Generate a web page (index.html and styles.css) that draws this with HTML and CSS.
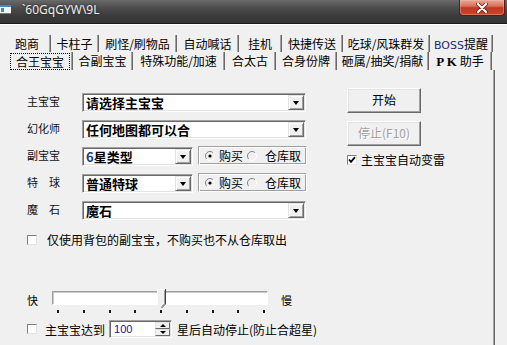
FILE: index.html
```html
<!DOCTYPE html>
<html>
<head>
<meta charset="utf-8">
<link rel="stylesheet" href="styles.css">
</head>
<body>
<div class="titlebar">
  <svg class="appicon" width="11" height="9" viewBox="0 0 11 9"><rect x="0" y="0" width="11" height="9" fill="#f4f4f4"/><rect x="0" y="0" width="11" height="2" fill="#4a86b8"/><rect x="1" y="3" width="3" height="4" fill="#2f9d86"/><rect x="0" y="8" width="11" height="1" fill="#777"/></svg>
  <span class="title">`60GqGYW\9L</span>
  <span class="spacer"></span>
  <div class="close"><svg width="14" height="10" viewBox="0 0 14 10"><path d="M3 1 L11 9 M11 1 L3 9" stroke="#5a1a10" stroke-width="3.6" stroke-linecap="round"/><path d="M3 1 L11 9 M11 1 L3 9" stroke="#fff" stroke-width="2.2" stroke-linecap="round"/></svg></div>
</div>
<div class="client">
  <div class="tabrow row1">
    <div class="tab w47">跑商</div>
    <div class="tab w48">卡柱子</div>
    <div class="tab w78">刷怪/刷物品</div>
    <div class="tab w62">自动喊话</div>
    <div class="tab w43">挂机</div>
    <div class="tab w61">快捷传送</div>
    <div class="tab w87">吃球/风珠群发</div>
    <div class="tab w63"><span class="boss">BOSS</span>提醒</div>
  </div>
  <div class="tabrow row2">
    <div class="tab w68 sel"><span class="focus">合王宝宝</span></div>
    <div class="tab w60">合副宝宝</div>
    <div class="tab w92">特殊功能/加速</div>
    <div class="tab w51">合太古</div>
    <div class="tab w61">合身份牌</div>
    <div class="tab w92">砸属/抽奖/捐献</div>
    <div class="tab w63"><b class="pk">P K</b> 助手</div>
  </div>
  <div class="panel">
    <div class="main">
      <div class="form">
        <div class="frow">
          <span class="lbl">主宝宝</span>
          <div class="combo"><span class="ctext">请选择主宝宝</span><span class="dd"><i class="arrow"></i></span></div>
        </div>
        <div class="frow">
          <span class="lbl">幻化师</span>
          <div class="combo"><span class="ctext">任何地图都可以合</span><span class="dd"><i class="arrow"></i></span></div>
        </div>
        <div class="frow">
          <span class="lbl">副宝宝</span>
          <div class="combo short"><span class="ctext"><span class="six">6</span>星类型</span><span class="dd"><i class="arrow"></i></span></div>
          <div class="grp">
            <svg class="radio" width="10" height="10" viewBox="0 0 10 10"><path d="M8.2 1.8 A4.5 4.5 0 0 0 1.8 8.2" fill="none" stroke="#808080" stroke-width="1"/><path d="M1.8 8.2 A4.5 4.5 0 0 0 8.2 1.8" fill="none" stroke="#fff" stroke-width="1"/><circle cx="5" cy="5" r="1.6" fill="#000"/></svg>
            <span class="rtext">购买</span>
            <svg class="radio r2" width="10" height="10" viewBox="0 0 10 10"><path d="M8.2 1.8 A4.5 4.5 0 0 0 1.8 8.2" fill="none" stroke="#808080" stroke-width="1"/><path d="M1.8 8.2 A4.5 4.5 0 0 0 8.2 1.8" fill="none" stroke="#fff" stroke-width="1"/></svg>
            <span class="rtext r2t">仓库取</span>
          </div>
        </div>
        <div class="frow">
          <span class="lbl">特　球</span>
          <div class="combo short"><span class="ctext">普通特球</span><span class="dd"><i class="arrow"></i></span></div>
          <div class="grp">
            <svg class="radio" width="10" height="10" viewBox="0 0 10 10"><path d="M8.2 1.8 A4.5 4.5 0 0 0 1.8 8.2" fill="none" stroke="#808080" stroke-width="1"/><path d="M1.8 8.2 A4.5 4.5 0 0 0 8.2 1.8" fill="none" stroke="#fff" stroke-width="1"/><circle cx="5" cy="5" r="1.6" fill="#000"/></svg>
            <span class="rtext">购买</span>
            <svg class="radio r2" width="10" height="10" viewBox="0 0 10 10"><path d="M8.2 1.8 A4.5 4.5 0 0 0 1.8 8.2" fill="none" stroke="#808080" stroke-width="1"/><path d="M1.8 8.2 A4.5 4.5 0 0 0 8.2 1.8" fill="none" stroke="#fff" stroke-width="1"/></svg>
            <span class="rtext r2t">仓库取</span>
          </div>
        </div>
        <div class="frow">
          <span class="lbl">魔　石</span>
          <div class="combo"><span class="ctext">魔石</span><span class="dd"><i class="arrow"></i></span></div>
        </div>
      </div>
      <div class="side">
        <div class="btn">开始</div>
        <div class="btn disabled">停止(F10)</div>
        <div class="chkrow side-chk">
          <span class="chk"><svg width="8" height="8" viewBox="0 0 8 8"><path d="M1 3.5 L3 5.8 L7 1.2" fill="none" stroke="#000" stroke-width="1.8"/></svg></span>
          <span class="ctxt">主宝宝自动变雷</span>
        </div>
      </div>
    </div>
    <div class="chkrow only">
      <span class="chk"></span>
      <span class="ctxt gap10">仅使用背包的副宝宝，不购买也不从仓库取出</span>
    </div>
    <div class="speed">
      <span class="slbl">快</span>
      <div class="slider">
        <div class="track"></div>
        <svg class="thumb" width="9" height="19" viewBox="0 0 9 19"><polygon points="0.5,0.5 8.5,0.5 8.5,15 4.5,18.5 0.5,15" fill="#f0f0f0"/><polyline points="0.5,15 0.5,0.5 8,0.5" fill="none" stroke="#fff"/><polyline points="8.5,0 8.5,15 4.5,19" fill="none" stroke="#404040"/><polyline points="7.5,1.5 7.5,14.5 4.5,17.5" fill="none" stroke="#a0a0a0"/></svg>
        <div class="ticks"><span class="tick"></span><span class="tick"></span><span class="tick"></span><span class="tick"></span><span class="tick"></span><span class="tick"></span><span class="tick"></span><span class="tick"></span><span class="tick"></span></div>
      </div>
      <span class="slbl slow">慢</span>
    </div>
    <div class="stoprow">
      <span class="chk"></span>
      <span class="ctxt gap8">主宝宝达到</span>
      <div class="spin">
        <span class="num">100</span>
        <span class="spinbtns"><span class="sb"><i class="up"></i></span><span class="sb"><i class="down"></i></span></span>
      </div>
      <span class="ctxt after">星后自动停止(防止合超星)</span>
    </div>
  </div>
</div>
</body>
</html>
```

FILE: styles.css
```css
* { box-sizing: border-box; }
html, body { margin: 0; padding: 0; }
body {
  width: 507px;
  height: 345px;
  overflow: hidden;
  background: #f0f0f0;
  font-family: "Noto Sans CJK SC", "Noto Sans", sans-serif;
  font-size: 12px;
  color: #000;
}

/* title bar */
.titlebar {
  height: 24px;
  display: flex;
  align-items: flex-start;
  background: linear-gradient(180deg, #6a6a6a 0%, #4c4c4c 35%, #3b3b3b 70%, #343434 100%);
  border-bottom: 1px solid #1a1a1a;
}
.appicon { margin-top: 5px; flex: none; }
.title {
  margin-left: 11px;
  margin-top: 2px;
  line-height: 16px;
  font-family: "Noto Sans", "Open Sans", sans-serif;
  font-size: 12px;
  color: #ececec;
  text-shadow: 0 0 3px #222;
}
.spacer { flex: 1; }
.close {
  width: 46px;
  height: 16px;
  margin-right: 2px;
  border: 1px solid #5b1d12;
  border-top: none;
  border-radius: 0 0 4px 4px;
  background: linear-gradient(180deg, #e9a796 0%, #d9735b 40%, #c0381f 52%, #c84a2e 100%);
  display: flex;
  align-items: center;
  justify-content: center;
  box-shadow: inset 0 0 0 1px rgba(255,200,180,0.35);
}

/* client area */
.client {
  border-top: 1px solid #ffffff;
  padding-top: 10px;
}
.tabrow { display: flex; }
.row1 { margin-left: 4px; height: 17px; }
.row2 { margin-left: 5px; height: 18px; }
.tab {
  flex: none;
  line-height: 17px;
  text-align: center;
  white-space: nowrap;
  border-right: 1px solid #696969;
  box-shadow: inset -1px 0 #a0a0a0;
}
.row2 .tab { line-height: 18px; }
.w43 { width: 43px; } .w47 { width: 47px; } .w48 { width: 48px; }
.w51 { width: 51px; } .w60 { width: 60px; } .w61 { width: 61px; }
.w62 { width: 62px; } .w63 { width: 63px; } .w68 { width: 68px; }
.w78 { width: 78px; } .w87 { width: 87px; } .w92 { width: 92px; }
.boss { color: #1e2a70; font-family: "DejaVu Sans", sans-serif; font-size: 11px; }
.pk { font-family: "Liberation Serif", serif; font-size: 13px; font-weight: bold; }
.tab.sel { padding: 1px 2px 0 5px; }
.focus {
  display: block;
  border: 1px dotted #000;
  line-height: 15px;
}

/* panel */
.panel {
  margin-left: 7px;
  width: 488px;
  height: 275px;
  border-right: 1px solid #696969;
  box-shadow: inset -1px 0 #a0a0a0;
  padding: 18px 0 0 20px;
}
.main { display: flex; gap: 40px; }
.form {
  margin-top: 5px;
  width: 280px;
  display: flex;
  flex-direction: column;
  gap: 8px;
}
.frow { display: flex; height: 19px; }
.lbl {
  width: 55px;
  flex: none;
  font-size: 11px;
  line-height: 13px;
  padding-top: 2px;
  color: #111;
}
.combo {
  width: 224px;
  height: 19px;
  flex: none;
  display: flex;
  background: #fff;
  border: 1px solid;
  border-color: #a0a0a0 #ffffff #ffffff #a0a0a0;
  box-shadow: inset 1px 1px #696969, inset -1px -1px #e3e3e3;
  padding: 1px 1px 1px 2px;
}
.combo.short { width: 111px; }
.ctext {
  flex: 1;
  font-weight: bold;
  font-size: 13px;
  line-height: 15px;
  padding-left: 1px;
  white-space: nowrap;
}
.six { color: #1c3490; }
.dd {
  width: 16px;
  flex: none;
  background: #f0f0f0;
  border: 1px solid;
  border-color: #e3e3e3 #696969 #696969 #e3e3e3;
  box-shadow: inset 1px 1px #fff, inset -1px -1px #a0a0a0;
  display: flex;
  align-items: center;
  justify-content: center;
}
.arrow {
  width: 0; height: 0;
  border-left: 3.5px solid transparent;
  border-right: 3.5px solid transparent;
  border-top: 4px solid #000;
  margin-top: 1px;
}
.grp {
  margin-left: 5px;
  margin-top: -1px;
  width: 109px;
  height: 19px;
  flex: none;
  border: 1px solid;
  border-color: #a0a0a0 #ffffff #ffffff #a0a0a0;
  box-shadow: inset 1px 1px #fff, inset -1px -1px #a0a0a0;
  display: flex;
  align-items: center;
  padding-left: 6px;
}
.radio { flex: none; }
.rtext { margin-left: 4px; line-height: 15px; white-space: nowrap; }
.r2 { margin-left: 4px; }
.r2t { margin-left: 8px; }

/* side */
.side { display: flex; flex-direction: column; width: 110px; }
.btn {
  width: 74px;
  height: 25px;
  background: #f0f0f0;
  border: 1px solid;
  border-color: #ffffff #696969 #696969 #ffffff;
  box-shadow: inset -1px -1px #a0a0a0, inset 1px 1px #e3e3e3;
  text-align: center;
  line-height: 22px;
}
.btn + .btn { margin-top: 8px; }
.btn.disabled { color: #a0a0a0; text-shadow: 1px 1px #fff; }
.chkrow { display: flex; align-items: center; line-height: 14px; }
.side-chk { margin-top: 7px; }
.chk {
  width: 10px;
  height: 10px;
  flex: none;
  background: #fff;
  border: 1px solid;
  border-color: #808080 #e3e3e3 #e3e3e3 #808080;
  display: flex;
  align-items: center;
  justify-content: center;
}
.ctxt { margin-left: 4px; white-space: nowrap; }
.gap10 { margin-left: 10px; }
.gap8 { margin-left: 8px; }
.only { margin-top: 13px; }

/* speed slider */
.speed { display: flex; align-items: flex-start; margin-top: 44px; }
.slbl {
  width: 25px;
  flex: none;
  font-size: 11px;
  line-height: 14px;
  padding-top: 2px;
}
.slow { width: auto; margin-left: 13px; }
.slider { width: 216px; flex: none; position: relative; }
.track {
  height: 14px;
  background: #fff;
  border: 1px solid;
  border-color: #a0a0a0 #ffffff #ffffff #a0a0a0;
  box-shadow: inset 1px 1px #c8c8c8;
}
.thumb { position: absolute; left: 105px; top: -2px; }
.ticks {
  display: flex;
  justify-content: space-between;
  height: 3px;
  margin-top: 5px;
  padding: 0 3px 0 5px;
}
.tick { display: block; width: 2px; height: 3px; background: #1a1a1a; }

/* stop row */
.stoprow { display: flex; align-items: center; height: 18px; margin-top: 7px; }
.spin {
  margin-left: 4px;
  width: 63px;
  height: 18px;
  flex: none;
  display: flex;
  background: #fff;
  border: 1px solid;
  border-color: #a0a0a0 #ffffff #ffffff #a0a0a0;
  box-shadow: inset 1px 1px #696969, inset -1px -1px #e3e3e3;
  padding: 1px 1px 1px 1px;
}
.num {
  flex: 1;
  font-family: "Liberation Sans", sans-serif;
  font-size: 11px;
  line-height: 14px;
  padding-left: 3px;
  color: #16168c;
}
.spinbtns { width: 15px; display: flex; flex-direction: column; flex: none; }
.sb {
  flex: 1;
  background: #f0f0f0;
  border: 1px solid;
  border-color: #e3e3e3 #696969 #696969 #e3e3e3;
  display: flex;
  align-items: center;
  justify-content: center;
}
.up {
  width: 0; height: 0;
  border-left: 3px solid transparent;
  border-right: 3px solid transparent;
  border-bottom: 3px solid #000;
}
.down {
  width: 0; height: 0;
  border-left: 3px solid transparent;
  border-right: 3px solid transparent;
  border-top: 3px solid #000;
}
.after { margin-left: 5px; }
```
